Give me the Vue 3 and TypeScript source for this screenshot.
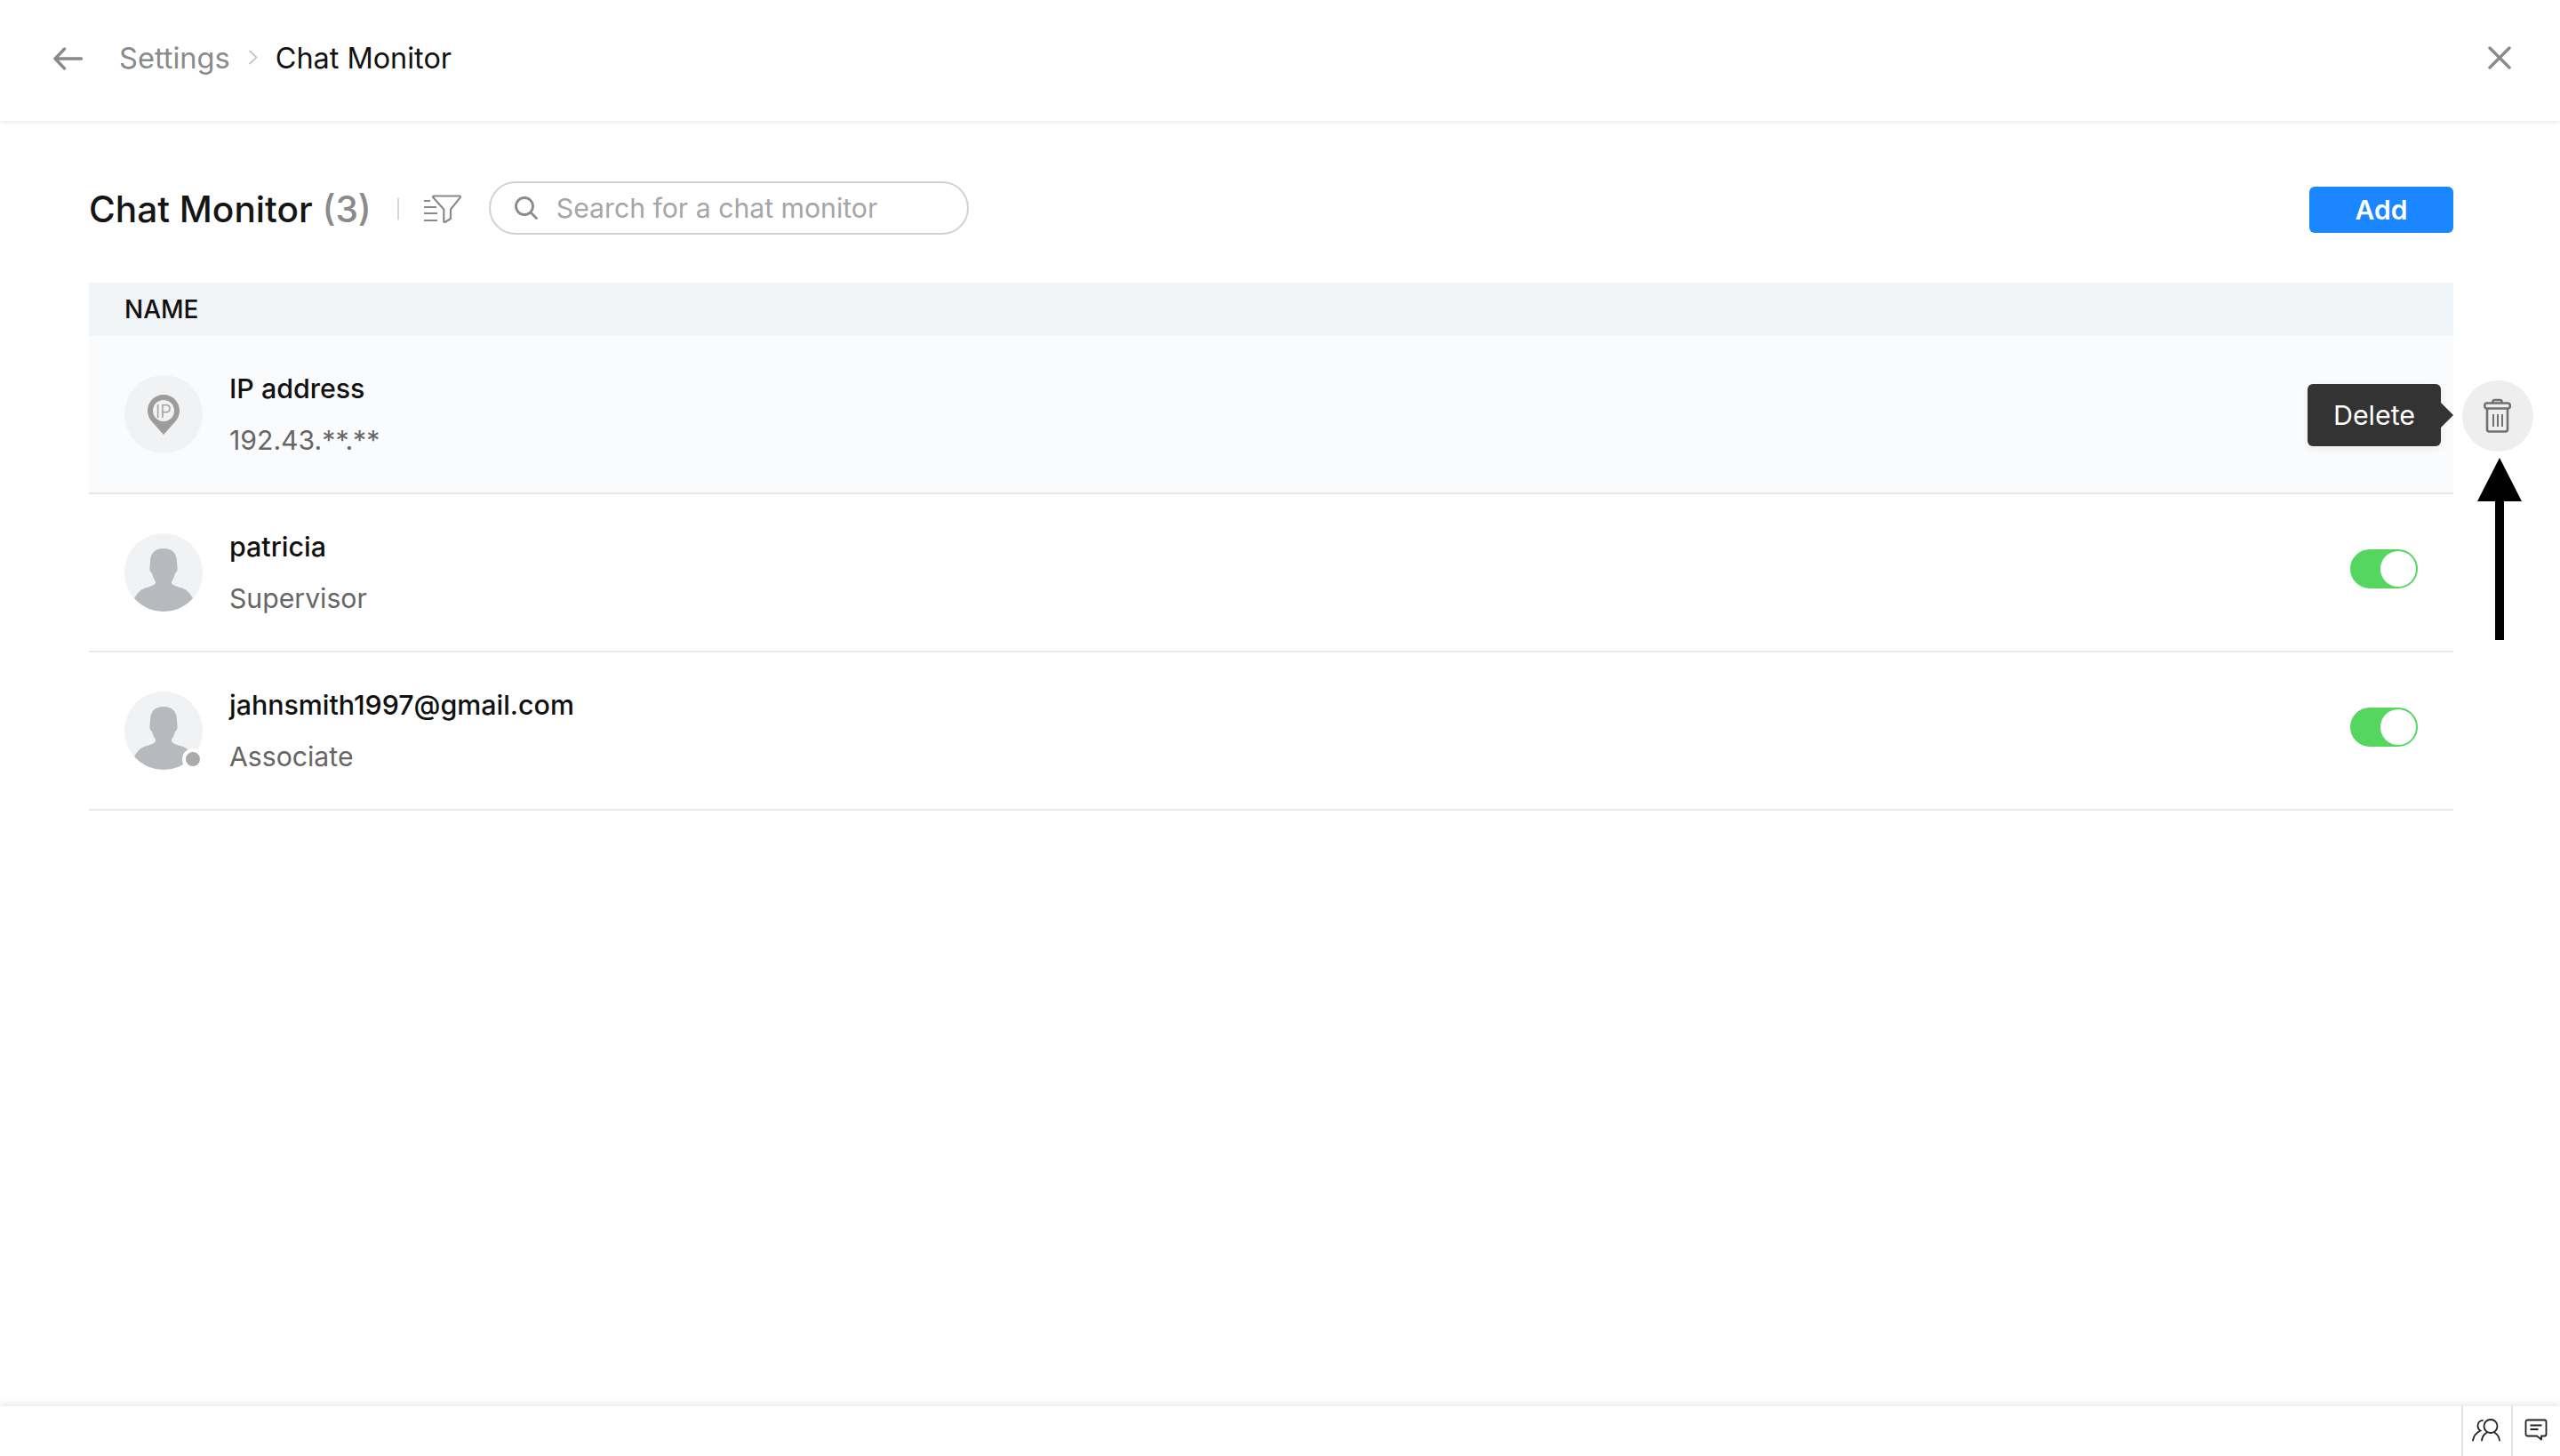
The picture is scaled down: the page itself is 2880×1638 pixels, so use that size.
<script setup lang="ts">
interface Row { name: string; sub: string; kind: 'ip' | 'user'; toggle: boolean; status: boolean; active: boolean }
const rows: Row[] = [
  { name: 'IP address', sub: '192.43.**.**', kind: 'ip', toggle: false, status: false, active: true },
  { name: 'patricia', sub: 'Supervisor', kind: 'user', toggle: true, status: false, active: false },
  { name: 'jahnsmith1997@gmail.com', sub: 'Associate', kind: 'user', toggle: true, status: true, active: false },
]
</script>

<template>
  <div class="page">
    <header class="topbar">
      <div class="crumbs">
        <svg class="back" width="33" height="26" viewBox="0 0 33 26" fill="none" stroke="#8a8a8a" stroke-width="3.400" stroke-linecap="round" stroke-linejoin="round">
          <path d="M31.500 13H2M12.500 2 2 13l10.500 11" />
        </svg>
        <span class="crumb-parent">Settings</span>
        <svg class="chev" width="11" height="17" viewBox="0 0 11 17" fill="none" stroke="#c9c9c9" stroke-width="2">
          <path d="M1.500 1 9.500 8.500l-8 7.500" />
        </svg>
        <span class="crumb-current">Chat Monitor</span>
      </div>
      <svg class="close" width="26" height="26" viewBox="0 0 26 26" fill="none" stroke="#8a8a8a" stroke-width="3.400" stroke-linecap="round">
        <path d="M2 2l22 22M24 2 2 24" />
      </svg>
    </header>

    <main class="content">
      <div class="toolbar">
        <h1 class="title">Chat Monitor <span class="count">(3)</span></h1>
        <span class="sep"></span>
        <svg class="filter" width="44" height="32" viewBox="0 0 44 32" fill="none" stroke="#8a8a8a" stroke-width="2.200" stroke-linejoin="round">
          <path d="M2 7h7M2 14h14M2 21h15M2 29h15" />
          <path d="M13 1.500h29a1 1 0 0 1 .8 1.600L32 16.500v10.500l-6.500 4c-.6.3-1.200-.1-1.200-.7V16.500L12.200 3.100A1 1 0 0 1 13 1.500Z" />
        </svg>
        <div class="search">
          <svg width="28" height="28" viewBox="0 0 28 28" fill="none" stroke="#8a8a8a" stroke-width="2.800" stroke-linecap="round">
            <circle cx="12" cy="12" r="9.500" />
            <path d="M19.500 19.500l6 6" />
          </svg>
          <span class="placeholder">Search for a chat monitor</span>
        </div>
        <button class="add" type="button">Add</button>
      </div>

      <div class="table">
        <div class="thead">NAME</div>
        <div v-for="row in rows" :key="row.name" class="row" :class="{ active: row.active }">
          <div class="avatar">
            <svg v-if="row.kind === 'ip'" class="pin" width="36" height="45" viewBox="0 0 36 45">
              <path fill="#9c9c9c" d="M18 0C8 0 0 8 0 18c0 4.800 1.900 9.200 5 12.400L18 45l13-14.600c3.100-3.200 5-7.600 5-12.400C36 8 28 0 18 0Z" />
              <circle cx="18" cy="18" r="12" fill="#f1f2f3" />
              <text x="18" y="25.500" text-anchor="middle" class="pin-text">IP</text>
            </svg>
            <svg v-else class="person" width="88" height="88" viewBox="0 0 88 88">
              <path fill="#b6b9bd" d="M44 17C35 17 29 22 29 32L28.500 38C28 41 29 44 31 45C32 49 33.500 52 35 54L35 56C33 59 28 60 22 62C17 64 14 68 11 73L20 88H68L77 73C74 68 71 64 66 62C60 60 55 59 53 56L53 54C54.500 52 56 49 57 45C59 44 60 41 59.500 38L59 32C59 22 53 17 44 17Z" />
            </svg>
            <span v-if="row.status" class="status"></span>
          </div>
          <div class="info">
            <div class="name">{{ row.name }}</div>
            <div class="sub">{{ row.sub }}</div>
          </div>
          <div v-if="row.toggle" class="toggle"><span class="knob"></span></div>
          <div v-if="row.active" class="tooltip">Delete</div>
          <div v-if="row.active" class="trash">
            <svg width="80" height="80" viewBox="0 0 80 80" fill="none" stroke="#707070" stroke-width="2.600" stroke-linejoin="round">
              <path d="M34.500 25.500V24a2 2 0 0 1 2-2h6a2 2 0 0 1 2 2v1.500" />
              <rect x="25.300" y="25.500" width="28.400" height="6" rx="2.500" />
              <path d="M28 31.500V55a2.500 2.500 0 0 0 2.500 2.500h18A2.500 2.500 0 0 0 51 55V31.500" />
              <path d="M35 38v14M40 38v14M45 38v14" stroke-width="2" />
            </svg>
          </div>
          <svg v-if="row.active" class="arrow" width="50" height="205" viewBox="0 0 50 205">
            <path fill="#000" d="M25 0 50 49H30v156H20V49H0Z" />
          </svg>
        </div>
      </div>
    </main>

    <footer class="bottombar">
      <div class="dock">
        <svg width="32" height="26" viewBox="0 0 32 26" fill="none" stroke="#222" stroke-width="1.800" stroke-linecap="round">
          <circle cx="21" cy="8.500" r="7.500" />
          <path d="M11 24.500c.5-4 2.500-7 5.500-8.800M25.500 15.700c3 1.800 5 4.800 5.500 8.800" />
          <path d="M12 1.800C8.500 2.200 6.500 5 6.500 8c0 2.500 1 4.500 3 5.500C6.500 15 2 18.500 1 24.500" />
        </svg>
      </div>
      <div class="dock">
        <svg width="26" height="26" viewBox="0 0 26 26" fill="none" stroke="#222" stroke-width="1.800" stroke-linejoin="round">
          <path d="M3.500 1.500h19a2 2 0 0 1 2 2v14a2 2 0 0 1-2 2h-3.500v4l-5-4h-10.500a2 2 0 0 1-2-2v-14a2 2 0 0 1 2-2Z" />
          <path d="M6.500 7.500h13M6.500 12h9" />
        </svg>
      </div>
    </footer>
  </div>
</template>

<style>
html, body { margin: 0; background: #fff; }
</style>

<style scoped>
.page {
  width: 2880px;
  height: 1638px;
  display: flex;
  flex-direction: column;
  overflow: hidden;
  background: #fff;
  font-family: Inter, "Liberation Sans", sans-serif;
  color: #111;
}
.topbar {
  height: 136px;
  flex: none;
  box-sizing: border-box;
  padding: 0 55px 6px 60px;
  display: flex;
  align-items: center;
  justify-content: space-between;
  box-shadow: 0 1px 6px rgba(0, 0, 0, 0.1);
  position: relative;
}
.crumbs { display: flex; align-items: center; }
.back { margin-right: 41px; margin-top: 2px; }
.crumb-parent { font-size: 32.600px; color: #8a8a8a; }
.chev { margin: -2px 20px 0 20px; }
.crumb-current { font-size: 32.400px; color: #111; }
.content {
  flex: 1;
  padding: 68px 120px 0 100px;
  min-height: 0;
}
.toolbar { display: flex; align-items: center; height: 60px; }
.title { margin: 3px 0 0; font-size: 40.600px; font-weight: 500; color: #151515; line-height: 60px; }
.count { color: #8a8a8a; }
.sep { width: 2px; height: 24px; background: #d6d6d6; margin: 2px 26px 0 29px; }
.filter { margin-top: 1px; }
.search {
  margin-left: 31px;
  width: 540px;
  height: 60px;
  box-sizing: border-box;
  border: 2px solid #d2d2d2;
  border-radius: 30px;
  padding-left: 26px;
  display: flex;
  align-items: center;
  gap: 20px;
  margin-top: -1px;
}
.placeholder { font-size: 30.200px; color: #a6a6a6; }
.add {
  margin-left: auto;
  width: 162px;
  height: 52px;
  border: 0;
  border-radius: 6px;
  background: #1a86ff;
  color: #fff;
  font: 600 30px Inter, "Liberation Sans", sans-serif;
  padding: 0;
  margin-top: 3px;
}
.table { margin-top: 54px; }
.thead {
  height: 60px;
  box-sizing: border-box;
  background: #f1f4f7;
  padding-left: 40px;
  display: flex;
  align-items: center;
  font-size: 28px;
  font-weight: 500;
  color: #111;
}
.row {
  height: 178px;
  box-sizing: border-box;
  padding: 0 40px;
  display: flex;
  align-items: center;
  gap: 30px;
  border-bottom: 2px solid #e8e9eb;
  position: relative;
}
.row.active { background: #fafbfd; }
.avatar {
  width: 88px;
  height: 88px;
  flex: none;
  border-radius: 50%;
  background: #f1f2f3;
  position: relative;
  display: flex;
  align-items: center;
  justify-content: center;
}
.person { border-radius: 50%; display: block; }
.pin-text { font: 300 20px Inter, sans-serif; fill: #9c9c9c; }
.status {
  position: absolute;
  right: -1px;
  bottom: 0;
  width: 16px;
  height: 16px;
  background: #ababab;
  border: 4px solid #fff;
  border-radius: 50%;
}
.info { flex: 1; margin-top: -1px; }
.name { font-size: 30.400px; font-weight: 500; color: #111; line-height: 40px; }
.sub { font-size: 30.200px; color: #666; line-height: 40px; margin-top: 18px; }
.toggle {
  width: 76px;
  height: 44px;
  flex: none;
  box-sizing: border-box;
  border: 2px solid #55d75f;
  border-radius: 22px;
  background: #55d75f;
  display: flex;
  justify-content: flex-end;
  margin-top: -8px;
}
.knob { width: 40px; height: 40px; border-radius: 50%; background: #fff; }
.tooltip {
  position: absolute;
  left: 2496px;
  top: 54px;
  width: 150px;
  height: 70px;
  border-radius: 6px;
  background: #333;
  color: #fff;
  font-size: 30.400px;
  display: flex;
  align-items: center;
  justify-content: center;
  box-shadow: 0 2px 8px rgba(0, 0, 0, 0.08);
}
.tooltip::after {
  content: "";
  position: absolute;
  left: 150px;
  top: 21px;
  border-style: solid;
  border-width: 14px 0 14px 14px;
  border-color: transparent transparent transparent #333;
}
.trash {
  position: absolute;
  left: 2670px;
  top: 50px;
  width: 80px;
  height: 80px;
  border-radius: 50%;
  background: #eeeeee;
}
.trash svg { display: block; }
.arrow { position: absolute; left: 2687px; top: 137px; }
.bottombar {
  height: 56px;
  flex: none;
  display: flex;
  justify-content: flex-end;
  box-shadow: 0 -2px 8px rgba(0, 0, 0, 0.1);
  position: relative;
}
.dock {
  border-left: 2px solid #e2e2e2;
  display: flex;
  align-items: center;
  justify-content: center;
  padding-bottom: 2px;
  padding-right: 2px;
  box-sizing: border-box;
}
.dock:first-child { width: 56px; }
.dock:last-child { width: 55px; }
</style>
